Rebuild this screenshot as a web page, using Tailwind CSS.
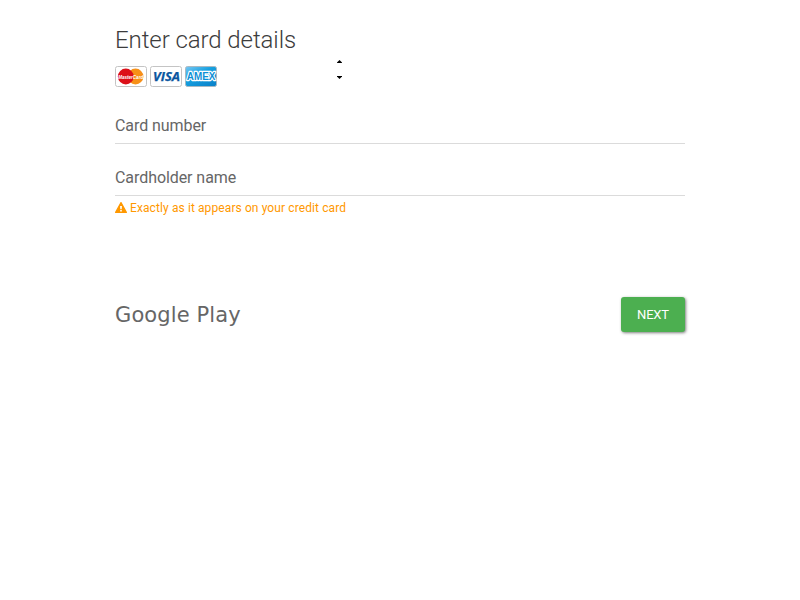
<!DOCTYPE html>
<html lang="en">
<head>
<meta charset="utf-8">
<title>Enter card details</title>
<script src="https://cdn.jsdelivr.net/npm/@tailwindcss/browser@4"></script>
</head>
<body class="min-h-screen bg-white font-[Roboto,sans-serif] text-[#666]">
<main class="mx-auto min-h-screen w-[570px] pt-6">
  <h1 class="h-8 text-2xl leading-8 font-light tracking-[-0.08px] text-[#3c3c3c]">Enter card details</h1>
  <div class="flex h-[31px] items-start">
    <div class="flex gap-[3px] pt-2.5">
      <svg class="overflow-visible" width="32" height="21" viewBox="0 0 32 21" role="img" aria-label="MasterCard">
        <rect x=".5" y=".5" width="31" height="20" rx="2" fill="#fff" stroke="#c4c4c4"/>
        <circle cx="20.5" cy="10.5" r="7.9" fill="#f79018"/>
        <circle cx="10.8" cy="10.5" r="7.9" fill="#dc1018"/>
        <text x="3.2" y="12.6" font-family="Liberation Sans, sans-serif" font-size="5.3" font-weight="700" font-style="italic" fill="#fff" textLength="25" lengthAdjust="spacingAndGlyphs">MasterCard</text>
      </svg>
      <svg class="overflow-visible" width="32" height="21" viewBox="0 0 32 21" role="img" aria-label="Visa">
        <rect x=".5" y=".5" width="31" height="20" rx="2" fill="#fff" stroke="#c4c4c4"/>
        <text x="3" y="14.5" font-family="Open Sans, sans-serif" font-size="11.5" font-weight="700" font-style="italic" fill="#0a56a0" stroke="#0a56a0" stroke-width=".25" textLength="27" lengthAdjust="spacingAndGlyphs">VISA</text>
      </svg>
      <svg class="overflow-visible" width="32" height="21" viewBox="0 0 32 21" role="img" aria-label="American Express">
        <defs><linearGradient id="amex" x1="0" y1="0" x2=".8" y2="1"><stop stop-color="#78c8f4"/><stop offset=".45" stop-color="#16a0e0"/><stop offset="1" stop-color="#0b84cb"/></linearGradient></defs>
        <rect x=".5" y=".5" width="31" height="20" rx="2" fill="url(#amex)" stroke="#a9b9c2"/>
        <text x="1.8" y="14.3" font-family="Liberation Sans, sans-serif" font-size="10.4" font-weight="700" fill="#0d90d6" stroke="#fff" stroke-width="2.4" stroke-linejoin="round" paint-order="stroke" textLength="28.5" lengthAdjust="spacingAndGlyphs">AMEX</text>
      </svg>
    </div>
    <div class="ml-[120px] flex flex-col gap-[13px] pt-1">
      <svg width="5" height="3" viewBox="0 0 5 3" fill="#000"><path d="M2.5 0 5 2.6V3H0v-.4z"/></svg>
      <svg width="5" height="3" viewBox="0 0 5 3" fill="#000"><path d="M0 0h5v.4L2.5 3 0 .4z"/></svg>
    </div>
  </div>
  <div class="mt-5 h-[37px] border-b border-[#dbdbdb] pt-[7px] text-base leading-6 tracking-[-0.07px]">Card number</div>
  <div class="mt-[15px] h-[37px] border-b border-[#dbdbdb] pt-[7px] text-base leading-6 tracking-[-0.07px]">Cardholder name</div>
  <div class="mt-1 flex h-4 items-start gap-[3px] text-xs leading-4 tracking-[0.1px] text-[#ff9800]">
    <svg class="mt-0.5" width="12" height="11" viewBox="0 0 12 11"><path d="M6 .6 11.4 10.4H.6z" fill="currentColor" stroke="currentColor" stroke-width="1.2" stroke-linejoin="round"/><path d="M5.1 3.9h1.8L6.7 7.2H5.3zM5.2 8h1.6v1.5H5.2z" fill="#fff"/></svg>
    <span>Exactly as it appears on your credit card</span>
  </div>
  <div class="mt-[81px] flex h-[35px] items-center justify-between">
    <span class="font-['DejaVu_Sans',sans-serif] text-[21px] leading-6 tracking-[0.12px]">Google Play</span>
    <button class="h-[35px] w-16 rounded-[3px] bg-[#4caf50] text-[13px] tracking-[-0.2px] text-white shadow-[1px_1px_3px_rgba(0,0,0,0.5)]">NEXT</button>
  </div>
</main>
</body>
</html>
